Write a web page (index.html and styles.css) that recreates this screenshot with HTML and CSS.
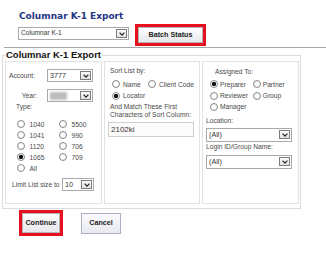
FILE: index.html
```html
<!DOCTYPE html>
<html>
<head>
<meta charset="utf-8">
<link rel="stylesheet" href="styles.css">
</head>
<body>
<div class="header">
  <h1 class="title">Columnar K-1 Export</h1>
  <div class="toolbar">
    <div class="sel sel-report"><span class="val">Columnar K-1</span><span class="arr"><svg width="6" height="4" viewBox="0 0 6 4"><path d="M0.6 0.7 L3 3.1 L5.4 0.7" fill="none" stroke="#222" stroke-width="1.2"/></svg></span></div>
    <div class="hilite"><button class="btn btn-batch">Batch Status</button></div>
  </div>
</div>
<div class="rule"></div>
<fieldset class="panel">
  <legend>Columnar K-1 Export</legend>
  <div class="cols">
    <div class="col col1">
      <div class="field f-account"><span class="flabel">Account:</span><div class="sel sel-sm"><span class="val">3777</span><span class="arr"><svg width="6" height="4" viewBox="0 0 6 4"><path d="M0.6 0.7 L3 3.1 L5.4 0.7" fill="none" stroke="#222" stroke-width="1.2"/></svg></span></div></div>
      <div class="field f-year"><span class="flabel">Year:</span><div class="sel sel-sm"><span class="blur"></span><span class="arr"><svg width="6" height="4" viewBox="0 0 6 4"><path d="M0.6 0.7 L3 3.1 L5.4 0.7" fill="none" stroke="#222" stroke-width="1.2"/></svg></span></div></div>
      <div class="type-label">Type:</div>
      <div class="type-grid">
        <label class="opt"><input type="radio" class="radio" name="type"><span>1040</span></label>
        <label class="opt"><input type="radio" class="radio" name="type"><span>5500</span></label>
        <label class="opt"><input type="radio" class="radio" name="type"><span>1041</span></label>
        <label class="opt"><input type="radio" class="radio" name="type"><span>990</span></label>
        <label class="opt"><input type="radio" class="radio" name="type"><span>1120</span></label>
        <label class="opt"><input type="radio" class="radio" name="type"><span>706</span></label>
        <label class="opt"><input type="radio" class="radio" name="type" checked><span>1065</span></label>
        <label class="opt"><input type="radio" class="radio" name="type"><span>709</span></label>
        <label class="opt"><input type="radio" class="radio" name="type"><span>All</span></label>
      </div>
      <div class="limit"><span>Limit List size to</span><div class="sel sel-limit"><span class="val">10</span><span class="arr"><svg width="6" height="4" viewBox="0 0 6 4"><path d="M0.6 0.7 L3 3.1 L5.4 0.7" fill="none" stroke="#222" stroke-width="1.2"/></svg></span></div></div>
    </div>
    <div class="col col2">
      <div class="clabel sort">Sort List by:</div>
      <div class="opts opts2">
        <label class="opt"><input type="radio" class="radio" name="sort"><span>Name</span></label>
        <label class="opt"><input type="radio" class="radio" name="sort"><span>Client Code</span></label>
        <label class="opt"><input type="radio" class="radio" name="sort" checked><span>Locator</span></label>
      </div>
      <div class="match">And Match These First<br>Characters of Sort Column:</div>
      <input class="text-in" type="text" value="2102ki">
    </div>
    <div class="col col3">
      <div class="clabel assigned">Assigned To:</div>
      <div class="opts opts3">
        <label class="opt"><input type="radio" class="radio" name="assign" checked><span>Preparer</span></label>
        <label class="opt"><input type="radio" class="radio" name="assign"><span>Partner</span></label>
        <label class="opt"><input type="radio" class="radio" name="assign"><span>Reviewer</span></label>
        <label class="opt"><input type="radio" class="radio" name="assign"><span>Group</span></label>
        <label class="opt"><input type="radio" class="radio" name="assign"><span>Manager</span></label>
      </div>
      <div class="clabel loc">Location:</div>
      <div class="sel sel-wide"><span class="val">(All)</span><span class="arr"><svg width="6" height="4" viewBox="0 0 6 4"><path d="M0.6 0.7 L3 3.1 L5.4 0.7" fill="none" stroke="#222" stroke-width="1.2"/></svg></span></div>
      <div class="clabel login">Login ID/Group Name:</div>
      <div class="sel sel-wide sel-login"><span class="val">(All)</span><span class="arr"><svg width="6" height="4" viewBox="0 0 6 4"><path d="M0.6 0.7 L3 3.1 L5.4 0.7" fill="none" stroke="#222" stroke-width="1.2"/></svg></span></div>
    </div>
  </div>
</fieldset>
<div class="actions">
  <div class="hilite"><button class="btn btn-continue">Continue</button></div>
  <button class="btn btn-cancel">Cancel</button>
</div>
</body>
</html>
```

FILE: styles.css
```css
* { box-sizing: border-box; }
body {
  margin: 0;
  font-family: "Liberation Sans", Arial, sans-serif;
  font-size: 6.7px;
  color: #4a4a4a;
  background: #fff;
  overflow: hidden;
}
.header { padding: 10px 0 0 18px; }
.title {
  margin: 0 0 0 1px;
  font: bold 9px/12px "DejaVu Sans", sans-serif;
  color: #1f3586;
}
.toolbar {
  display: flex;
  align-items: flex-start;
  gap: 6px;
  margin-top: 2px;
  height: 22px;
}
.sel {
  display: flex;
  align-items: center;
  justify-content: space-between;
  border: 1px solid #a9a9a9;
  background: #fff;
  padding: 0 1px 0 2px;
  height: 13px;
}
.sel .val { font-size: 7.2px; color: #333; line-height: 1; }
.arr {
  width: 11px;
  height: 9px;
  border: 1px solid #7d7d7d;
  background: linear-gradient(#fcfcfc, #e2e2e2);
  display: flex;
  align-items: center;
  justify-content: center;
  flex: none;
}
.arr svg { display: block; }
.sel-report { width: 111px; margin-top: 3px; }
.sel-report .val { font-size: 6.6px; }
.hilite { border: 3px solid #e8101e; display: flex; }
.btn {
  font: bold 7.2px/1 "Liberation Sans", Arial, sans-serif;
  color: #222;
  border: 1px solid #b3b3b3;
  background: linear-gradient(#fdfdfd, #e8e8ec);
  padding: 0;
  margin: 0;
}
.btn-batch { width: 65px; height: 16px; }
.rule { height: 1px; background: #a6a6a6; margin: 1px 0 0 4px; }
.panel {
  margin: 1px 0 0 2px;
  width: 299px;
  border: 1px solid #dcdcdc;
  padding: 0 1px 4px 2px;
  min-width: 0;
}
.panel legend {
  font: bold 9.5px/12px "Liberation Sans", Arial, sans-serif;
  color: #111;
  padding: 0 1px;
  margin-left: 0;
}
.cols {
  display: grid;
  grid-template-columns: 97px 96px 97px;
  column-gap: 2px;
  height: 143px;
}
.col { border: 1px solid #e2e2e2; }
.field { display: flex; align-items: center; height: 13px; }
.flabel { width: 31px; text-align: right; margin-right: 10px; }
.f-account { margin-top: 7px; }
.f-account .flabel { padding-right: 2px; }
.f-year { margin-top: 7px; }
.sel-sm { width: 46px; }
.blur {
  width: 17px;
  height: 8px;
  background: #bdbdbd;
  filter: blur(1.2px);
}
.type-label { margin: 1px 0 0 10px; line-height: 8px; }
.type-grid {
  margin-top: 7.5px;
  padding-left: 11px;
  display: grid;
  grid-template-columns: 42px 42px;
  grid-auto-rows: 11px;
}
.opt { display: flex; align-items: center; gap: 4.5px; }
.radio {
  -webkit-appearance: none;
  appearance: none;
  width: 8px;
  height: 8px;
  margin: 0;
  border: 1px solid #8a8a8a;
  border-radius: 50%;
  background: radial-gradient(circle, #fff 40%, #e6e6e6 100%);
  flex: none;
}
.radio:checked {
  background: radial-gradient(circle, #111 0 1.9px, #fff 2.4px, #e6e6e6 100%);
}
.limit {
  display: flex;
  align-items: center;
  gap: 2.5px;
  margin-top: 4px;
  height: 14px;
  padding-left: 6px;
}
.sel-limit { width: 32px; }
.clabel { line-height: 8px; }
.sort { margin-top: 5px; padding-left: 5px; }
.opts {
  display: grid;
  grid-auto-rows: 11.4px;
}
.opts2 { margin-top: 3.5px; padding-left: 7px; grid-template-columns: 36px auto; }
.opts2 .opt { gap: 3px; }
.match { margin-top: 1.5px; padding-left: 5px; line-height: 8.4px; }
.text-in {
  display: block;
  margin: 2px 0 0 3px;
  width: 86px;
  height: 15px;
  border: 1px solid #cfcfcf;
  background: #fbfbfb;
  padding: 0 2px;
  font: 8px "Liberation Sans", Arial, sans-serif;
  color: #333;
  outline: none;
}
.assigned { margin-top: 6px; padding-left: 12px; }
.opts3 { margin-top: 2.5px; padding-left: 7px; grid-template-columns: 42.7px auto; }
.opts3 .opt { gap: 2px; }
.loc { margin-top: 4.3px; padding-left: 3px; }
.sel-wide { width: 86px; height: 14px; margin: 3px 0 0 3px; }
.login { margin-top: 1px; padding-left: 3px; }
.sel-login { margin-top: 4px; }
.actions {
  display: flex;
  align-items: center;
  gap: 18px;
  margin-top: 1px;
  padding-left: 19px;
}
.btn-continue { width: 38px; height: 20px; }
.btn-cancel { width: 40px; height: 21px; border-color: #aab0c0; background: linear-gradient(#fbfbfd, #e9eaf0); }
```
